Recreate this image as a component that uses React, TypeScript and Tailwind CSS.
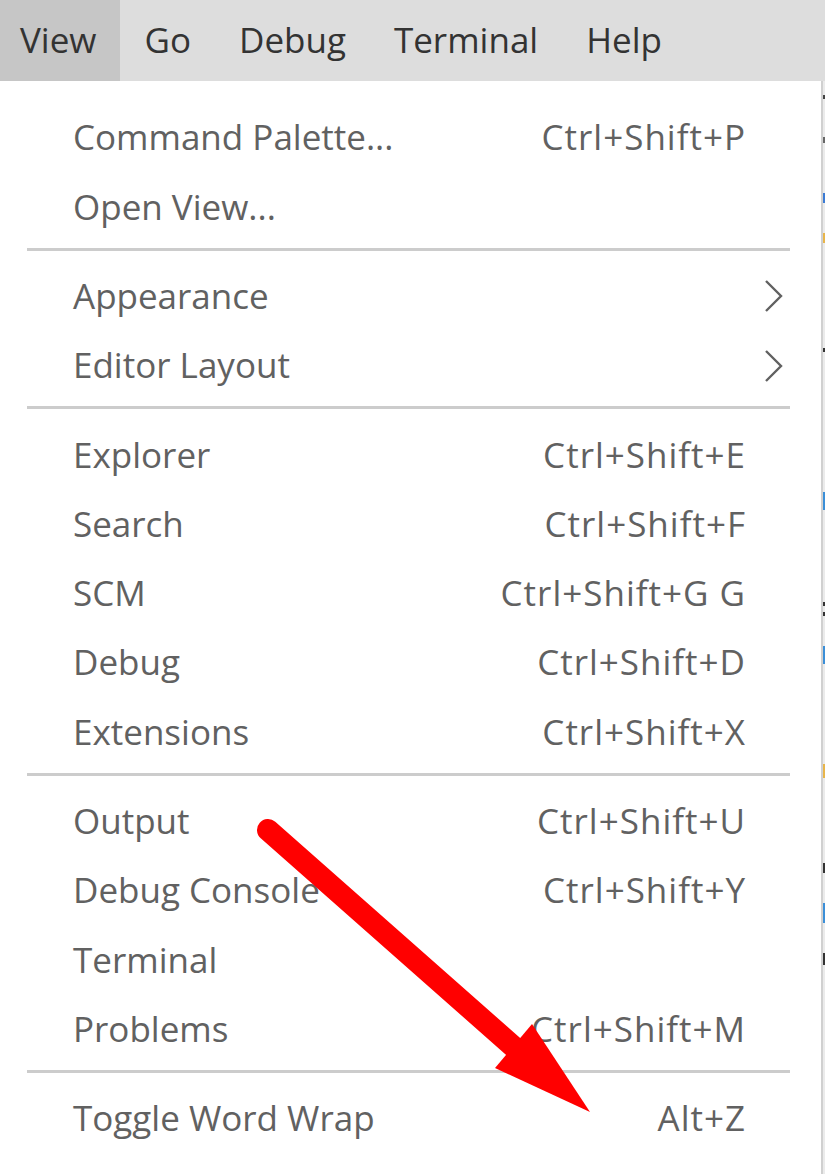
type Row =
  | { kind: "item"; label: string; shortcut?: string; submenu?: boolean }
  | { kind: "sep" };

const rows: Row[] = [
  { kind: "item", label: "Command Palette...", shortcut: "Ctrl+Shift+P" },
  { kind: "item", label: "Open View..." },
  { kind: "sep" },
  { kind: "item", label: "Appearance", submenu: true },
  { kind: "item", label: "Editor Layout", submenu: true },
  { kind: "sep" },
  { kind: "item", label: "Explorer", shortcut: "Ctrl+Shift+E" },
  { kind: "item", label: "Search", shortcut: "Ctrl+Shift+F" },
  { kind: "item", label: "SCM", shortcut: "Ctrl+Shift+G G" },
  { kind: "item", label: "Debug", shortcut: "Ctrl+Shift+D" },
  { kind: "item", label: "Extensions", shortcut: "Ctrl+Shift+X" },
  { kind: "sep" },
  { kind: "item", label: "Output", shortcut: "Ctrl+Shift+U" },
  { kind: "item", label: "Debug Console", shortcut: "Ctrl+Shift+Y" },
  { kind: "item", label: "Terminal" },
  { kind: "item", label: "Problems", shortcut: "Ctrl+Shift+M" },
  { kind: "sep" },
  { kind: "item", label: "Toggle Word Wrap", shortcut: "Alt+Z" },
  { kind: "item", label: "Toggle Minimap" },
];

const menubar = ["View", "Go", "Debug", "Terminal", "Help"];

// bits of the editor peeking out behind the menu's right edge
const peeks = [
  { gap: 14, h: 4, c: "bg-[#444]" },
  { gap: 38, h: 6, c: "bg-[#666]" },
  { gap: 50, h: 10, c: "bg-[#3b7bd4]" },
  { gap: 30, h: 10, c: "bg-[#e8b54a]" },
  { gap: 105, h: 4, c: "bg-[#333]" },
  { gap: 140, h: 18, c: "bg-[#3b8fd8]" },
  { gap: 92, h: 4, c: "bg-[#333]" },
  { gap: 6, h: 4, c: "bg-[#333]" },
  { gap: 30, h: 18, c: "bg-[#3b8fd8]" },
  { gap: 100, h: 14, c: "bg-[#e8b54a]" },
  { gap: 85, h: 10, c: "bg-[#333]" },
  { gap: 30, h: 20, c: "bg-[#3b8fd8]" },
  { gap: 30, h: 12, c: "bg-[#333]" },
];

function Chevron() {
  return (
    <svg width="20" height="34" viewBox="0 0 20 34" fill="none">
      <polyline
        points="2,2 17,17 2,32"
        stroke="#616161"
        strokeWidth="2.4"
        strokeLinejoin="miter"
      />
    </svg>
  );
}

export default function App() {
  return (
    <div className="relative h-[1174px] w-[825px] overflow-hidden bg-white font-['Open_Sans',sans-serif]">
      <div className="flex h-[81px] bg-[#dddddd] text-[35px] text-[#333333]">
        {menubar.map((m, i) => (
          <div
            key={m}
            className={
              i === 0
                ? "flex items-center bg-[#c6c6c6] pl-[20px] pr-[24px]"
                : "flex items-center px-[24px]"
            }
          >
            {m}
          </div>
        ))}
      </div>

      <div className="flex">
        <div className="w-[821px] pt-[22px] text-[35px] text-[#616161]">
          {rows.map((r, i) =>
            r.kind === "sep" ? (
              <div
                key={i}
                className="ml-[27px] mr-[31px] mt-[6px] mb-[11px] h-[3px] bg-[#cccccc]"
              />
            ) : (
              <div key={i} className="flex h-[69.3px] items-center pl-[73px]">
                <span className="flex-1 whitespace-nowrap">{r.label}</span>
                {r.shortcut && (
                  <span className="whitespace-nowrap tracking-[1px]">
                    {r.shortcut}
                  </span>
                )}
                <span className="flex w-[75px] items-center pl-[18px]">
                  {r.submenu && <Chevron />}
                </span>
              </div>
            )
          )}
        </div>
        <div className="flex h-[1093px] w-[4px] flex-col border-l-2 border-[#d0d0d0] bg-[#ebebeb]">
          {peeks.map((p, i) => (
            <div
              key={i}
              className={`w-[3px] shrink-0 ${p.c}`}
              style={{ marginTop: p.gap, height: p.h }}
            />
          ))}
        </div>
      </div>

      <svg
        className="pointer-events-none absolute left-0 top-0"
        width="825"
        height="1174"
        viewBox="0 0 825 1174"
      >
        <line
          x1="268"
          y1="830"
          x2="516"
          y2="1049"
          stroke="#ff0000"
          strokeWidth="22"
          strokeLinecap="round"
        />
        <polygon points="495,1068 532,1024 590,1112" fill="#ff0000" />
      </svg>
    </div>
  );
}
